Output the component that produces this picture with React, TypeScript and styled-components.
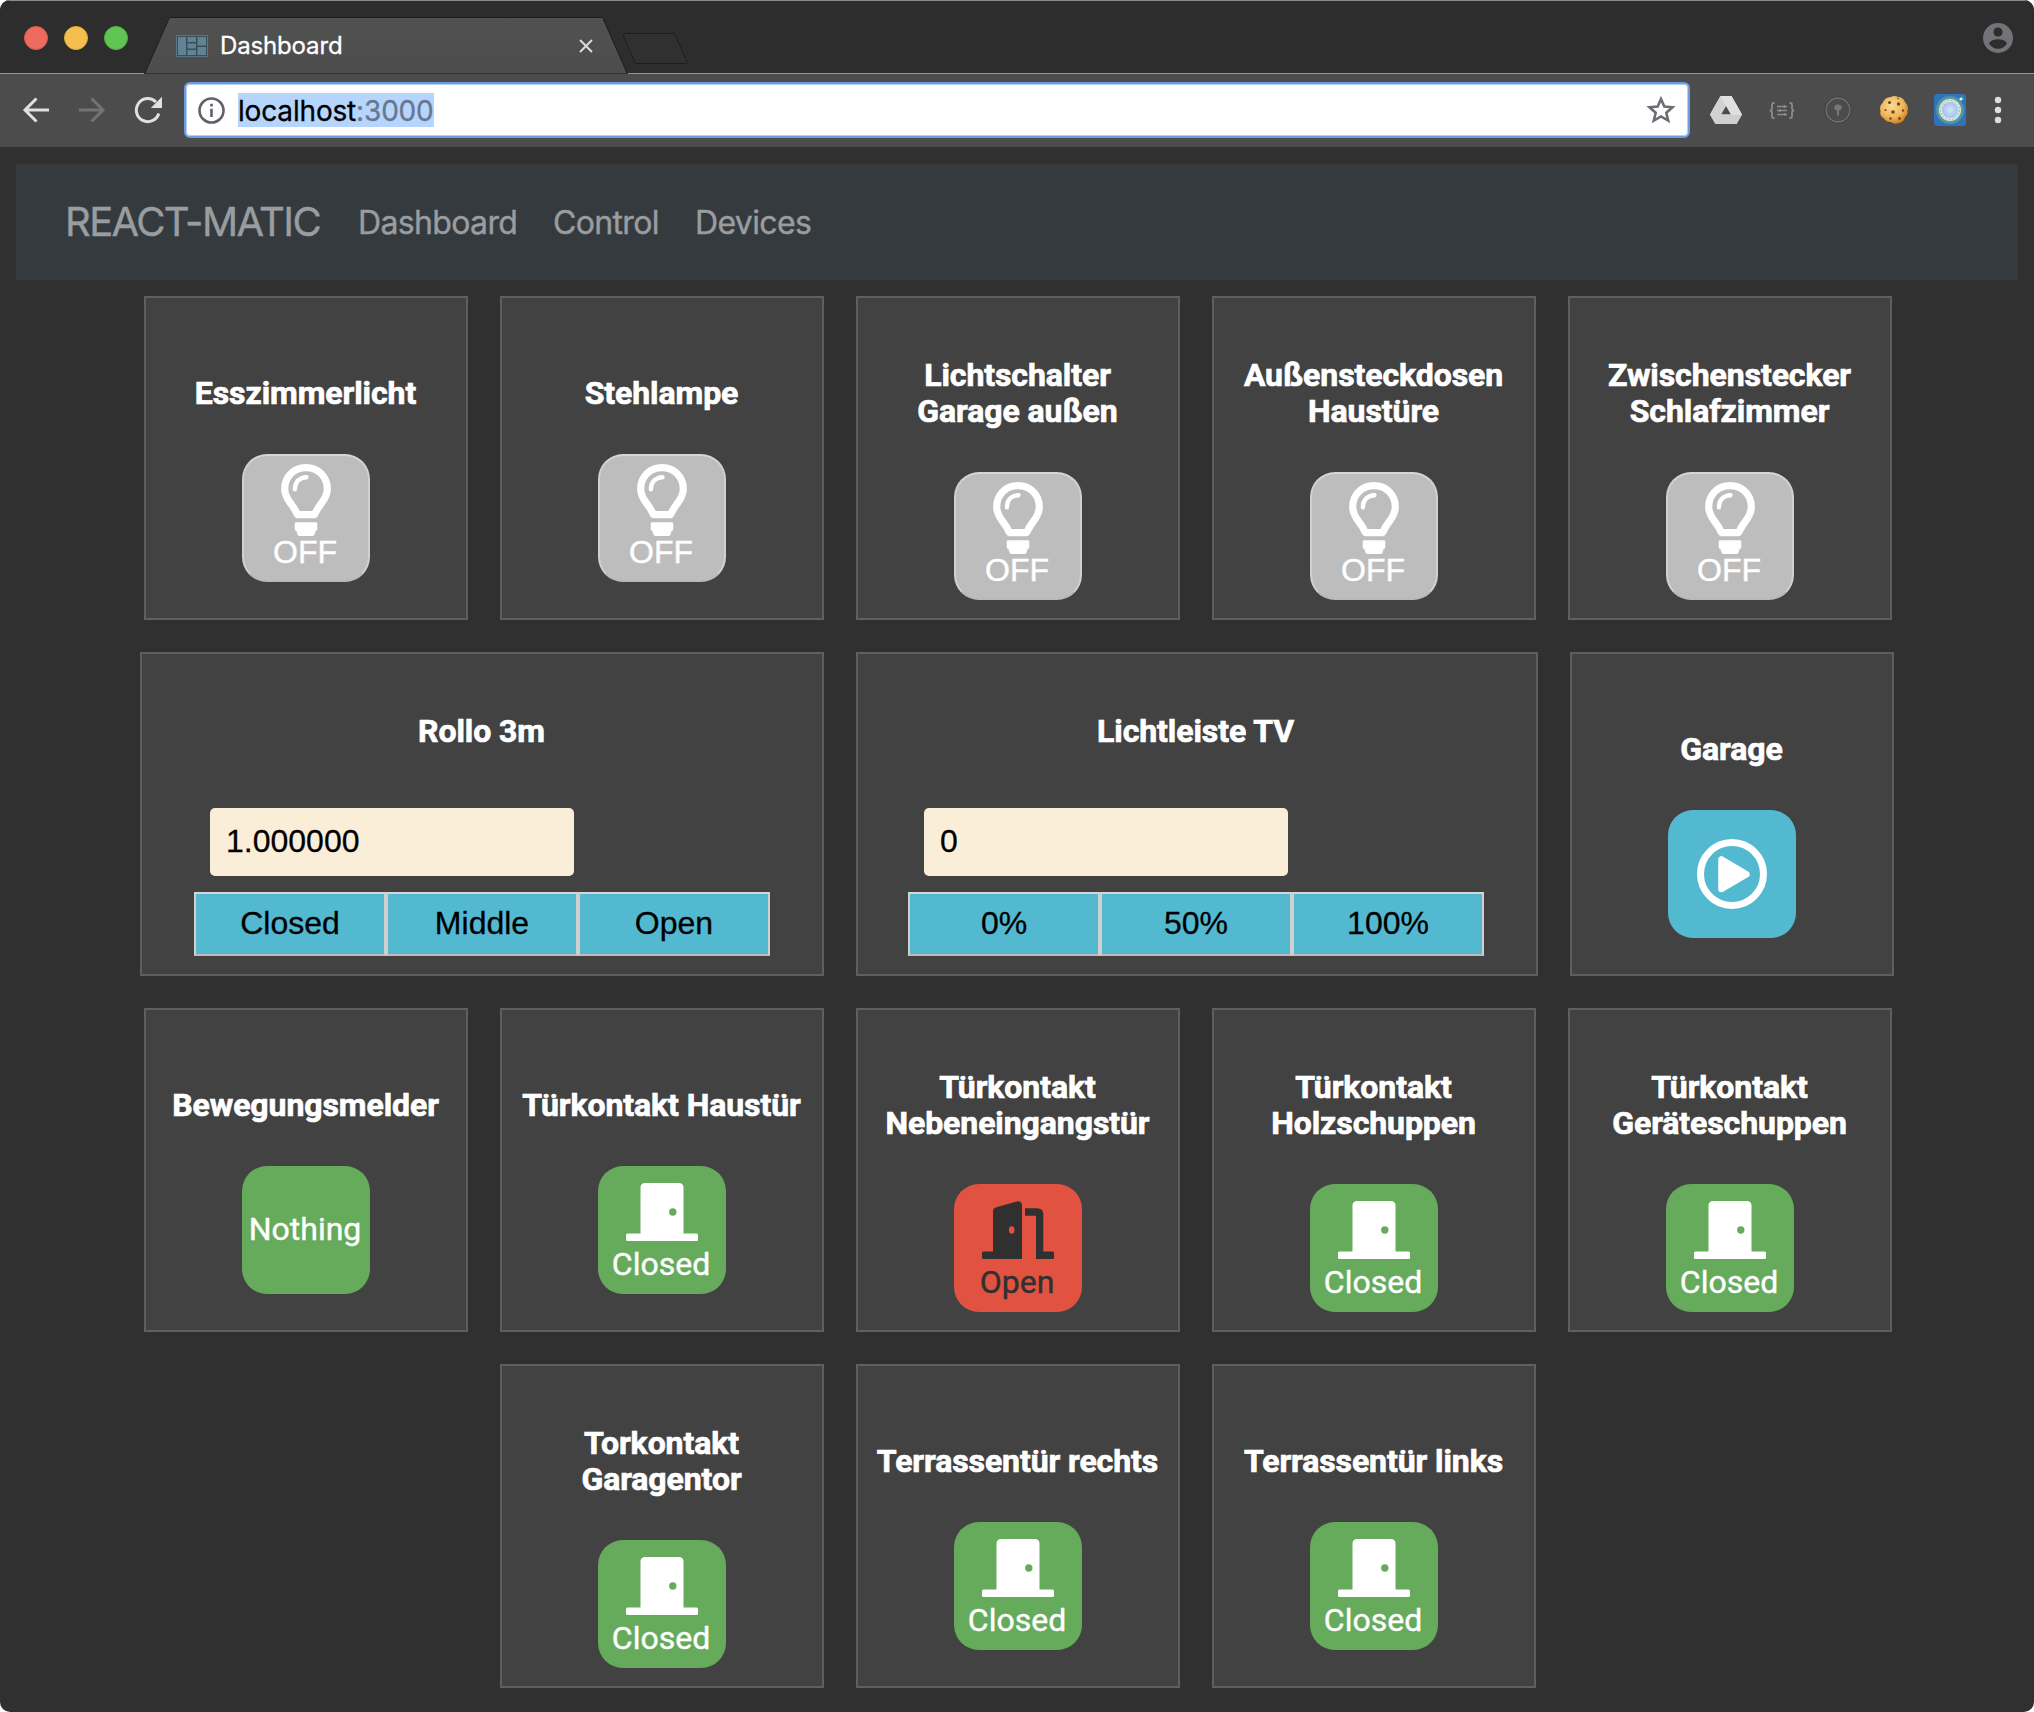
import React from "react";
import styled, { createGlobalStyle, css } from "styled-components";

const Global = createGlobalStyle`
  * { box-sizing: border-box; }
  html, body { margin: 0; padding: 0; background: #fff; }
  button, input { font: inherit; margin: 0; }
`;

const ui = `"Inter", "Liberation Sans", sans-serif`;
const roboto = `Roboto, "Liberation Sans", sans-serif`;
const helvetica = `"Liberation Sans", Arial, sans-serif`;

const Window = styled.div`
  width: 2034px;
  height: 1712px;
  display: flex;
  flex-direction: column;
  background: #303030;
  border-radius: 10px;
  overflow: hidden;
`;

/* ---------- browser chrome ---------- */

const TitleBar = styled.header`
  height: 73px;
  flex: none;
  display: flex;
  align-items: flex-start;
  background: #2d2d2d;
  border-top: 1px solid #8a8c8b;
`;

const Lights = styled.div`
  display: flex;
  gap: 16px;
  padding: 25px 0 0 24px;
  width: 144px;
  flex: none;
`;

const Light = styled.span<{ $color: string; $rim: string }>`
  width: 24px;
  height: 24px;
  border-radius: 50%;
  background: ${(p) => p.$color};
  border: 1px solid ${(p) => p.$rim};
`;

const Tab = styled.div`
  position: relative;
  width: 484px;
  height: 57px;
  margin-top: 16px;
  padding: 0 35px 0 32px;
  display: flex;
  align-items: center;
  flex: none;
`;

const TabShape = styled.svg`
  position: absolute;
  inset: 0;
`;

const Favicon = styled.svg`
  position: relative;
  flex: none;
  margin-right: 12px;
`;

const TabTitle = styled.span`
  position: relative;
  flex: 1;
  font: 400 24px/30px ${ui};
  letter-spacing: -0.15px;
  -webkit-text-stroke: 0.3px;
  color: #fff;
`;

const TabClose = styled.svg`
  position: relative;
  flex: none;
`;

const NewTab = styled.svg`
  margin: 30px 0 0 -8px;
  flex: none;
`;

const Profile = styled.svg`
  margin: 22px 21px 0 auto;
  flex: none;
`;

const Toolbar = styled.div`
  height: 74px;
  flex: none;
  display: flex;
  align-items: center;
  padding: 0 28px 1px 22px;
  background: #4c4c4c;
  border-top: 1px solid #959795;
`;

const NavIcons = styled.div`
  display: flex;
  gap: 28px;
  width: 162px;
  flex: none;
`;

const UrlBar = styled.div`
  width: 1506px;
  height: 56px;
  flex: none;
  display: flex;
  align-items: center;
  padding: 0 12px;
  background: #fff;
  border: 2px solid #6b9be3;
  border-radius: 6px;
  box-shadow: inset 0 0 0 1px #b4cff6;
`;

const Url = styled.span`
  margin-left: 13px;
  height: 34px;
  background: #b5d5fd;
  color: #000;
  font: 400 28px/36px ${ui};
  letter-spacing: -0.17px;
  -webkit-text-stroke: 0.3px;
  white-space: nowrap;

  em {
    font-style: normal;
    color: #66788f;
  }
`;

const Star = styled.svg`
  margin-left: auto;
`;

const Extensions = styled.div`
  flex: 1;
  display: grid;
  grid-template-columns: repeat(5, 32px) 16px;
  align-items: center;
  justify-items: center;
  justify-content: end;
  gap: 24px;
`;

/* ---------- page ---------- */

const Page = styled.main`
  flex: 1;
  padding: 17px 0 0;
`;

const Navbar = styled.nav`
  height: 116px;
  margin: 0 16px 16px;
  padding: 0 48px;
  display: flex;
  align-items: center;
  background: #353a3e;
  color: #9a9da0;
  font-family: ${ui};
  -webkit-text-stroke: 0.4px;
`;

const Brand = styled.a`
  width: 293px;
  padding-left: 1px;
  font-size: 40px;
  line-height: 60px;
  letter-spacing: -1.6px;
  white-space: nowrap;
`;

const NavLink = styled.a<{ $w: number }>`
  width: ${(p) => p.$w}px;
  padding: 2px 0 0 1px;
  font-size: 32px;
  line-height: 48px;
  letter-spacing: -0.65px;
  white-space: nowrap;
`;

const Rows = styled.div`
  display: flex;
  flex-direction: column;
  gap: 32px;
`;

const Row = styled.section<{ $offset?: number }>`
  display: flex;
  justify-content: center;
  gap: 32px;
  padding-left: ${(p) => p.$offset ?? 2}px;
`;

const Card = styled.article<{ $w?: number; $padRight?: number }>`
  width: ${(p) => p.$w ?? 324}px;
  height: 324px;
  flex: none;
  padding-right: ${(p) => p.$padRight ?? 0}px;
  display: flex;
  flex-direction: column;
  align-items: center;
  justify-content: center;
  background: #424242;
  border: 2px solid #5e5e5e;
`;

const Title = styled.h5`
  margin: 41px 1px 43px 0;
  font: 700 32px/36px ${roboto};
  letter-spacing: -0.08px;
  -webkit-text-stroke: 0.7px #fff;
  color: #fff;
  text-align: center;
  white-space: pre-line;
`;

type Tone = "off" | "good" | "alert" | "action";

const tones = {
  off: css`
    background: #bdbdbd;
    color: #fff;
    border: 2px solid;
    border-color: #d6d6d6 #d0d0d0 #b9b9b9 #d0d0d0;
    font-family: ${helvetica};
  `,
  good: css`
    background: #66ab5b;
    color: #fff;
  `,
  alert: css`
    background: #e15241;
    color: #303030;
  `,
  action: css`
    background: #52b9d1;
    color: #fff;
  `,
};

const Tile = styled.button<{ $tone: Tone }>`
  width: 128px;
  height: 128px;
  flex: none;
  padding: 0;
  display: flex;
  flex-direction: column;
  align-items: center;
  justify-content: center;
  border: 2px solid transparent;
  border-radius: 25px;
  background-clip: border-box;
  background-origin: border-box;
  font-family: ${roboto};
  font-size: 32px;
  line-height: 36px;
  ${(p) => tones[p.$tone]}
`;

const IconSlot = styled.span`
  height: 70px;
  display: flex;
  align-items: center;
`;

const Label = styled.span`
  white-space: nowrap;
  margin: -1px 2px 1px 0;
  -webkit-text-stroke: 0.4px;
`;

const Control = styled.div`
  width: 576px;
  display: flex;
  flex-direction: column;
  align-items: flex-start;
`;

const ValueInput = styled.input`
  width: 364px;
  height: 68px;
  margin: 16px;
  padding: 0 16px 2px;
  border: 0;
  border-radius: 5px;
  background: #fbeed8;
  color: #000;
  font: 32px/36px ${helvetica};
  -webkit-text-stroke: 0.3px;
`;

const ButtonGroup = styled.div`
  display: grid;
  grid-template-columns: repeat(3, 192px);
`;

const Preset = styled.button`
  height: 64px;
  padding: 0 0 2px;
  background: #52b9d1;
  border: 2px solid;
  border-color: #d6d6d6 #d0d0d0 #bcbcbc #d0d0d0;
  color: #000;
  font: 32px/36px ${helvetica};
  -webkit-text-stroke: 0.3px;
`;

/* ---------- icons ---------- */

const Bulb = () => (
  <svg width="52" height="72" viewBox="0 0 52 72" fill="none" stroke="#fff">
    <path
      d="M26 3.600C13.700 3.600 4.700 12.800 4.700 24.800C4.700 31 7 34.500 10 38.500C13.500 43 15.600 46.500 17.400 50.600H34.600C36.400 46.500 38.500 43 42 38.500C45 34.500 47.300 31 47.300 24.800C47.300 12.800 38.300 3.600 26 3.600Z"
      strokeWidth="7.200"
      strokeLinejoin="round"
    />
    <path d="M14.900 25.300C14.900 18 19.500 13.500 26.500 13.200" strokeWidth="4.400" strokeLinecap="round" />
    <path
      d="M16 58.300H36Q37.300 58.300 37.300 59.800V65Q37.300 67 35.400 67.300Q35 72 32.500 72H19.500Q17 72 16.600 67.300Q14.700 67 14.700 65V59.800Q14.700 58.300 16 58.300Z"
      fill="#fff"
      stroke="none"
    />
  </svg>
);

const DoorClosed = () => (
  <svg width="72" height="58" viewBox="0 0 72 58" fill="currentColor">
    <path
      fillRule="evenodd"
      d="M18.500 0H53.500Q57.500 0.500 57.500 4.500V50.500H70.500Q72 50.500 72 52V56.500Q72 58 70.500 58H1.500Q0 58 0 56.500V52Q0 50.500 1.500 50.500H14.500V4.500Q14.500 0.500 18.500 0ZM46.800 25.300A3.700 3.700 0 1 0 46.800 32.700A3.700 3.700 0 1 0 46.800 25.300Z"
    />
  </svg>
);

const DoorOpen = () => (
  <svg width="72" height="58" viewBox="0 0 72 58" fill="currentColor">
    <path
      fillRule="evenodd"
      d="M13.500 6.500L35.500 0.200Q40 0 40 4V58H1.500Q0 58 0 56.500V52Q0 50.500 1.500 50.500H11V9.500Q11 7.300 13.500 6.500ZM29.700 25.300A2.800 3.700 0 1 0 29.700 32.700A2.800 3.700 0 1 0 29.700 25.300Z"
    />
    <path d="M43 7.300H55Q61.300 7.300 61.300 13.500V50.500H70.500Q72 50.500 72 52V56.500Q72 58 70.500 58H54V14.700H43Z" />
  </svg>
);

const Play = () => (
  <svg width="70" height="70" viewBox="0 0 70 70">
    <circle cx="35" cy="35" r="31.500" fill="none" stroke="#fff" strokeWidth="7" />
    <path d="M24.500 20.500V50L49.500 35.300Z" fill="#fff" stroke="#fff" strokeWidth="6.500" strokeLinejoin="round" />
  </svg>
);

const DriveIcon = () => (
  <svg width="32" height="28" viewBox="0 0 32 28">
    <path d="M10.500 0H21.500L32 18.500L26.500 28H5.500L0 18.500Z" fill="#dcdcdc" />
    <path d="M10.500 0L0 18.500L5.500 28L16 9.500Z" fill="#d2d2d2" />
    <path d="M5.500 28L11 18.500H32L26.500 28Z" fill="#cfcfcf" />
    <path d="M10.500 0H21.500L32 18.500H21Z" fill="#e0e0e0" />
    <path d="M16 10L20.700 18.300H11.300Z" fill="#4c4c4c" />
  </svg>
);

const BracesIcon = () => (
  <svg width="26" height="17" viewBox="0 0 26 17" fill="none" stroke="#8a8a8a" strokeWidth="1.800">
    <path d="M5.500 1H4.500Q3 1 3 3V6Q3 8.500 0.800 8.500Q3 8.500 3 11V14Q3 16 4.500 16H5.500" />
    <path d="M20.500 1H21.500Q23 1 23 3V6Q23 8.500 25.200 8.500Q23 8.500 23 11V14Q23 16 21.500 16H20.500" />
    <path d="M8 4.500H18M8 8.500H18M8 12.500H18" strokeWidth="1.400" />
    <path d="M15.500 3V6M11 7V10M15.500 11V14" strokeWidth="1.400" />
  </svg>
);

const KeyholeIcon = () => (
  <svg width="28" height="28" viewBox="0 0 28 28" fill="none">
    <circle cx="14" cy="14" r="13" stroke="#333" strokeWidth="1" />
    <circle cx="14" cy="14" r="12" stroke="#737373" strokeWidth="1.300" />
    <ellipse cx="14" cy="11.500" rx="3.800" ry="3" fill="#777" />
    <path d="M14 12V19.500" stroke="#777" strokeWidth="2.200" />
  </svg>
);

const CookieIcon = () => (
  <svg width="30" height="30" viewBox="0 0 30 30">
    <defs>
      <radialGradient id="cookie" cx="42%" cy="36%" r="65%">
        <stop offset="0" stopColor="#fbdc96" />
        <stop offset="0.650" stopColor="#edb558" />
        <stop offset="1" stopColor="#d08228" />
      </radialGradient>
    </defs>
    <path
      d="M12 2Q15 0 19 2Q24 2 26 7Q30 11 28.500 16Q29 20 26 22Q25 27 20 28Q15 30 12 27Q7 27 5 23.500Q0 21 1.500 16Q0 11 3.500 8Q6 2 12 2Z"
      fill="url(#cookie)"
    />
    <g fill="#7a4818">
      <circle cx="10.500" cy="7.500" r="1.600" />
      <circle cx="19.500" cy="9" r="1.700" />
      <circle cx="14" cy="17" r="1.800" />
      <circle cx="6.500" cy="15" r="1.100" />
      <circle cx="24" cy="15.500" r="1.200" />
      <circle cx="11.500" cy="23.500" r="1.300" />
      <circle cx="20.500" cy="23.500" r="1.400" />
      <circle cx="19" cy="3.500" r="0.800" />
    </g>
  </svg>
);

const GlobeIcon = () => (
  <svg width="32" height="32" viewBox="0 0 32 32">
    <defs>
      <radialGradient id="globe">
        <stop offset="0" stopColor="#d6e6f6" />
        <stop offset="1" stopColor="#9fc2e8" />
      </radialGradient>
      <radialGradient id="halo">
        <stop offset="0.600" stopColor="#8fc4e8" />
        <stop offset="1" stopColor="#2f73bb" />
      </radialGradient>
    </defs>
    <rect width="32" height="32" rx="4" fill="#2f73bb" />
    <circle cx="16" cy="16" r="15" fill="url(#halo)" />
    <circle cx="16" cy="16" r="11.800" fill="#dfe4f2" stroke="#5aa366" strokeWidth="1.600" />
    <circle cx="16" cy="16" r="9.500" fill="none" stroke="#a3b0d0" strokeWidth="1" strokeDasharray="2 1.500" />
    <circle cx="16" cy="16" r="8" fill="url(#globe)" />
    <circle cx="27" cy="5" r="1.600" fill="#e8f2fb" />
    <path d="M27 2.500Q29.500 2.500 29.500 5" fill="none" stroke="#5aa366" />
  </svg>
);

/* ---------- data ---------- */

interface Device {
  title: string;
  state: "OFF" | "Nothing" | "Closed" | "Open";
}

const lights: Device[] = [
  { title: "Esszimmerlicht", state: "OFF" },
  { title: "Stehlampe", state: "OFF" },
  { title: "Lichtschalter\nGarage außen", state: "OFF" },
  { title: "Außensteckdosen\nHaustüre", state: "OFF" },
  { title: "Zwischenstecker\nSchlafzimmer", state: "OFF" },
];

const sensors: Device[] = [
  { title: "Bewegungsmelder", state: "Nothing" },
  { title: "Türkontakt Haustür", state: "Closed" },
  { title: "Türkontakt\nNebeneingangstür", state: "Open" },
  { title: "Türkontakt\nHolzschuppen", state: "Closed" },
  { title: "Türkontakt\nGeräteschuppen", state: "Closed" },
];

const doors: Device[] = [
  { title: "Torkontakt\nGaragentor", state: "Closed" },
  { title: "Terrassentür rechts", state: "Closed" },
  { title: "Terrassentür links", state: "Closed" },
];

const looks: Record<Device["state"], { tone: Tone; icon?: React.ReactNode }> = {
  OFF: { tone: "off", icon: <Bulb /> },
  Nothing: { tone: "good" },
  Closed: { tone: "good", icon: <DoorClosed /> },
  Open: { tone: "alert", icon: <DoorOpen /> },
};

const DeviceCard = ({ title, state }: Device) => {
  const look = looks[state];
  return (
    <Card>
      <Title>{title}</Title>
      <Tile $tone={look.tone}>
        {look.icon && <IconSlot>{look.icon}</IconSlot>}
        <Label>{state}</Label>
      </Tile>
    </Card>
  );
};

interface LevelProps {
  title: string;
  value: string;
  presets: string[];
  width: number;
  padRight?: number;
}

const LevelCard = ({ title, value, presets, width, padRight }: LevelProps) => (
  <Card $w={width} $padRight={padRight}>
    <Title>{title}</Title>
    <Control>
      <ValueInput defaultValue={value} />
      <ButtonGroup>
        {presets.map((p) => (
          <Preset key={p}>{p}</Preset>
        ))}
      </ButtonGroup>
    </Control>
  </Card>
);

const BrowserChrome = () => (
  <>
    <TitleBar>
      <Lights>
        <Light $color="#ed6a5e" $rim="#e0584c" />
        <Light $color="#f5bf4f" $rim="#e2ab3c" />
        <Light $color="#61c554" $rim="#52b144" />
      </Lights>
      <Tab>
        <TabShape width="484" height="57" viewBox="0 0 484 57">
          <defs>
            <linearGradient id="tab" x1="0" y1="0" x2="0" y2="1">
              <stop offset="0" stopColor="#505250" />
              <stop offset="1" stopColor="#4c4c4c" />
            </linearGradient>
          </defs>
          <path d="M0.500 57L25 1.500Q25.500 0.500 27 0.500H457Q458.500 0.500 459 1.500L483.500 57Z" fill="url(#tab)" stroke="#1c1c1c" />
        </TabShape>
        <Favicon width="32" height="22" viewBox="0 0 32 22">
          <rect x="0.500" y="0.500" width="31" height="21" fill="#3e4d55" stroke="#5b7684" />
          <g fill="#5f8496">
            <rect x="2" y="2" width="8" height="18" />
            <rect x="11.500" y="2" width="8.500" height="5" />
            <rect x="11.500" y="8.500" width="8.500" height="5" />
            <rect x="11.500" y="15" width="8.500" height="5" />
            <rect x="21.500" y="2" width="8.500" height="8.500" />
            <rect x="21.500" y="12" width="8.500" height="8" />
          </g>
        </Favicon>
        <TabTitle>Dashboard</TabTitle>
        <TabClose width="14" height="14" viewBox="0 0 14 14" stroke="#dcdcdc" strokeWidth="2">
          <path d="M1 1L13 13M13 1L1 13" />
        </TabClose>
      </Tab>
      <NewTab width="72" height="34" viewBox="0 0 72 34">
        <path d="M4 2.500H53Q54.500 2.500 55 3.500L67 31Q67.500 32.500 66 32.500H17Q15.500 32.500 15 31.500L3 4Q2.500 2.500 4 2.500Z" fill="#303030" stroke="#1e1e1e" />
      </NewTab>
      <Profile width="30" height="30" viewBox="0 0 30 30">
        <circle cx="15" cy="15" r="15" fill="#717378" />
        <circle cx="15" cy="9" r="4.600" fill="#2d2d2d" />
        <path d="M6 20.500Q8.500 16.300 15 16.300Q21.500 16.300 24 20.500Q20.500 25.800 15 25.800Q9.500 25.800 6 20.500Z" fill="#2d2d2d" />
      </Profile>
    </TitleBar>
    <Toolbar>
      <NavIcons>
        <svg width="28" height="28" viewBox="0 0 28 28" fill="none" stroke="#e0e0e0" strokeWidth="3">
          <path d="M27 14H3M14.500 2.500L3 14L14.500 25.500" />
        </svg>
        <svg width="28" height="28" viewBox="0 0 28 28" fill="none" stroke="#737373" strokeWidth="3">
          <path d="M1 14H25M13.500 2.500L25 14L13.500 25.500" />
        </svg>
        <svg width="30" height="28" viewBox="0 0 30 28" fill="none" stroke="#e0e0e0" strokeWidth="3">
          <path d="M24.800 17.500A11.500 11.500 0 1 1 22 6" />
          <path d="M28 0.800V12H16.800Z" fill="#e0e0e0" stroke="none" />
        </svg>
      </NavIcons>
      <UrlBar>
        <svg width="27" height="27" viewBox="0 0 27 27" fill="none" stroke="#5f6267" strokeWidth="2.600">
          <circle cx="13.500" cy="13.500" r="12" />
          <path d="M13.500 11.800V20M13.500 6.800V9.600" />
        </svg>
        <Url>
          localhost<em>:3000</em>
        </Url>
        <Star width="30" height="30" viewBox="0 0 30 30" fill="none" stroke="#6b6e74" strokeWidth="2.600">
          <path d="M15 4L18.300 11.600L26.500 12.300L20.300 17.700L22.200 25.700L15 21.500L7.800 25.700L9.700 17.700L3.500 12.300L11.700 11.600Z" />
        </Star>
      </UrlBar>
      <Extensions>
        <DriveIcon />
        <BracesIcon />
        <KeyholeIcon />
        <CookieIcon />
        <GlobeIcon />
        <svg width="16" height="28" viewBox="0 0 16 28" fill="#dedede">
          <circle cx="8" cy="4" r="3.200" />
          <circle cx="8" cy="14" r="3.200" />
          <circle cx="8" cy="24" r="3.200" />
        </svg>
      </Extensions>
    </Toolbar>
  </>
);

export default function App() {
  return (
    <>
      <Global />
      <Window>
        <BrowserChrome />
        <Page>
          <Navbar>
            <Brand>REACT-MATIC</Brand>
            <NavLink $w={195}>Dashboard</NavLink>
            <NavLink $w={142}>Control</NavLink>
            <NavLink $w={130}>Devices</NavLink>
          </Navbar>
          <Rows>
            <Row>
              {lights.map((d) => (
                <DeviceCard key={d.title} {...d} />
              ))}
            </Row>
            <Row $offset={0}>
              <LevelCard title="Rollo 3m" value="1.000000" presets={["Closed", "Middle", "Open"]} width={684} />
              <LevelCard title="Lichtleiste TV" value="0" presets={["0%", "50%", "100%"]} width={682} padRight={2} />
              <Card>
                <Title>Garage</Title>
                <Tile $tone="action">
                  <Play />
                </Tile>
              </Card>
            </Row>
            <Row>
              {sensors.map((d) => (
                <DeviceCard key={d.title} {...d} />
              ))}
            </Row>
            <Row>
              {doors.map((d) => (
                <DeviceCard key={d.title} {...d} />
              ))}
            </Row>
          </Rows>
        </Page>
      </Window>
    </>
  );
}
